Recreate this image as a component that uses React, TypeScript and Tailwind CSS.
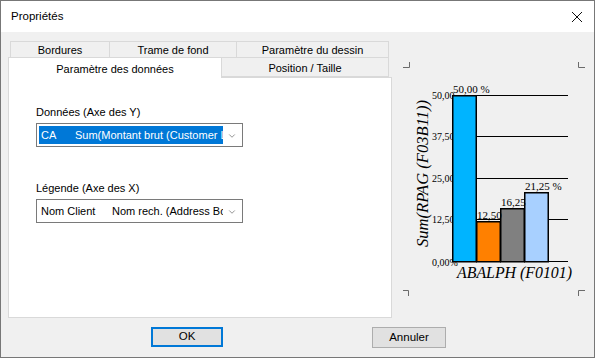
import { ChevronDown } from "lucide-react";

const ui = { fontFamily: '"Liberation Sans", Arial, sans-serif' };

function Combo({ left, right, leftW, selected }: { left: string; right: string; leftW: string; selected?: boolean }) {
  return (
    <div className="flex h-[24px] w-[207px] items-center border border-[#7a7a7a] bg-white pl-[2px] pr-[5px]">
      <div
        className={`flex h-[18px] w-[184px] items-center overflow-hidden whitespace-nowrap pl-[2px] ${
          selected ? "bg-[#0078d7] text-white" : "text-black"
        }`}
      >
        <span className={`${leftW} shrink-0`}>{left}</span>
        <span>{right}</span>
      </div>
      <ChevronDown className="ml-auto mt-[2px] h-[10px] w-[10px] text-[#555]" strokeWidth={1.5} />
    </div>
  );
}

function Chart() {
  // page origin of the svg: (392, 32)
  const ox = 392;
  const oy = 32;
  const X = (v: number) => v - ox;
  const Y = (v: number) => v - oy;
  const grid = [95, 136, 178, 219, 261];
  const ticks = ["50,00", "37,50", "25,00", "12,50"];
  const bars = [
    { x: 452, top: 95, fill: "#00b4ff" },
    { x: 476, top: 221, fill: "#ff8000" },
    { x: 500, top: 208, fill: "#808080" },
    { x: 524, top: 192, fill: "#a8d0ff" },
  ];
  const mark = "#6b6b6b";
  return (
    <svg width={203} height={286} className="block" style={{ fontFamily: '"Liberation Serif", "Times New Roman", serif' }}>
      {/* corner marks */}
      <path d={`M${X(403)} ${Y(67.5)}H${X(409.5)}V${Y(62)}`} stroke={mark} fill="none" />
      <path d={`M${X(578.5)} ${Y(62)}V${Y(67.5)}H${X(585)}`} stroke={mark} fill="none" />
      <path d={`M${X(403)} ${Y(290.5)}H${X(408.5)}V${Y(296)}`} stroke={mark} fill="none" />
      <path d={`M${X(578.5)} ${Y(296)}V${Y(290.5)}H${X(585)}`} stroke={mark} fill="none" />

      {/* tick labels */}
      {ticks.map((t, i) => (
        <text key={t} x={X(432)} y={Y(grid[i] + 3.5)} fontSize={10} fill="#000">
          {t}
        </text>
      ))}
      <text x={X(432)} y={Y(265.5)} fontSize={10} fill="#000">
        0,00%
      </text>

      {/* gridlines */}
      {grid.map((g) => (
        <line key={g} x1={X(452)} x2={X(568)} y1={Y(g) + 0.5} y2={Y(g) + 0.5} stroke="#000" />
      ))}

      {/* bars */}
      {bars.map((b) => (
        <rect
          key={b.x}
          x={X(b.x) + 0.75}
          y={Y(b.top) + 0.75}
          width={23.5}
          height={261 - b.top}
          fill={b.fill}
          stroke="#000"
          strokeWidth={1.5}
        />
      ))}

      {/* value labels */}
      <text x={X(453)} y={Y(93)} fontSize={11}>50,00 %</text>
      <text x={X(477)} y={Y(219)} fontSize={11}>12,50</text>
      <text x={X(501)} y={Y(206)} fontSize={11}>16,25</text>
      <text x={X(525)} y={Y(190)} fontSize={11}>21,25 %</text>

      {/* axis titles */}
      <text
        transform={`translate(${X(428)} ${Y(247)}) rotate(-90)`}
        fontSize={16}
        fontStyle="italic"
        textLength={147}
        lengthAdjust="spacingAndGlyphs"
      >
        Sum(RPAG (F03B11))
      </text>
      <text
        x={X(457)}
        y={Y(278)}
        fontSize={16}
        fontStyle="italic"
        textLength={115}
        lengthAdjust="spacingAndGlyphs"
      >
        ABALPH (F0101)
      </text>
    </svg>
  );
}

export default function App() {
  return (
    <div
      className="flex h-[358px] w-[595px] flex-col border border-[#777] bg-[#f0f0f0] text-[11px] text-black"
      style={ui}
    >
      {/* title bar */}
      <div className="flex h-[31px] shrink-0 items-center justify-between bg-white pl-[10px] pr-[10px]">
        <span className="text-[11.5px]">Propriétés</span>
        <svg width="12" height="12" viewBox="0 0 12 12" className="mr-[1px]">
          <path d="M1 1L11 11M11 1L1 11" stroke="#111" strokeWidth="1" />
        </svg>
      </div>

      <div className="flex h-[286px] shrink-0">
        {/* left column: tabs + panel */}
        <div className="flex w-[391px] shrink-0 flex-col pl-[7px] pt-[9px]">
          <div className="ml-[2px] flex h-[17px]">
            {[
              ["Bordures", "w-[100px]"],
              ["Trame de fond", "w-[127px]"],
              ["Paramètre du dessin", "w-[152px]"],
            ].map(([t, w], i) => (
              <div
                key={t}
                className={`${w} flex items-center justify-center border-y border-r border-[#d9d9d9] ${
                  i === 0 ? "border-l" : ""
                } bg-[#f0f0f0] pt-[2px]`}
              >
                {t}
              </div>
            ))}
          </div>
          <div className="flex h-[19px] items-end">
            <div className="relative z-10 -mb-px flex h-[21px] w-[214px] items-start justify-center border-x border-t border-[#d9d9d9] bg-white pt-[3px]">
              Paramètre des données
            </div>
            <div className="flex h-[19px] w-[167px] items-center justify-center border-r border-b border-[#d9d9d9] bg-[#f0f0f0] pt-[2px]">
              Position / Taille
            </div>
          </div>
          <div className="flex h-[241px] w-[384px] flex-col border border-[#d9d9d9] bg-white pl-[27px] pt-[27px]">
            <div className="h-[14px] leading-[14px]">Données (Axe des Y)</div>
            <div className="mt-[4px]">
              <Combo left="CA" leftW="w-[34px]" right="Sum(Montant brut (Customer Le" selected />
            </div>
            <div className="mt-[34px] h-[14px] leading-[14px]">Légende (Axe des X)</div>
            <div className="mt-[4px]">
              <Combo left="Nom Client" leftW="w-[71px]" right="Nom rech. (Address Boo" />
            </div>
          </div>
        </div>

        {/* chart */}
        <div className="flex-1">
          <Chart />
        </div>
      </div>

      {/* buttons */}
      <div className="flex h-[20px] shrink-0 mt-[9px] text-[11.5px]">
        <div className="ml-[150px] flex h-[20px] w-[72px] items-center justify-center border-2 border-[#0078d7] bg-[#e1e1e1]">
          OK
        </div>
        <div className="ml-[149px] flex h-[21px] w-[74px] items-center justify-center border border-[#adadad] bg-[#e1e1e1]">
          Annuler
        </div>
      </div>
    </div>
  );
}
